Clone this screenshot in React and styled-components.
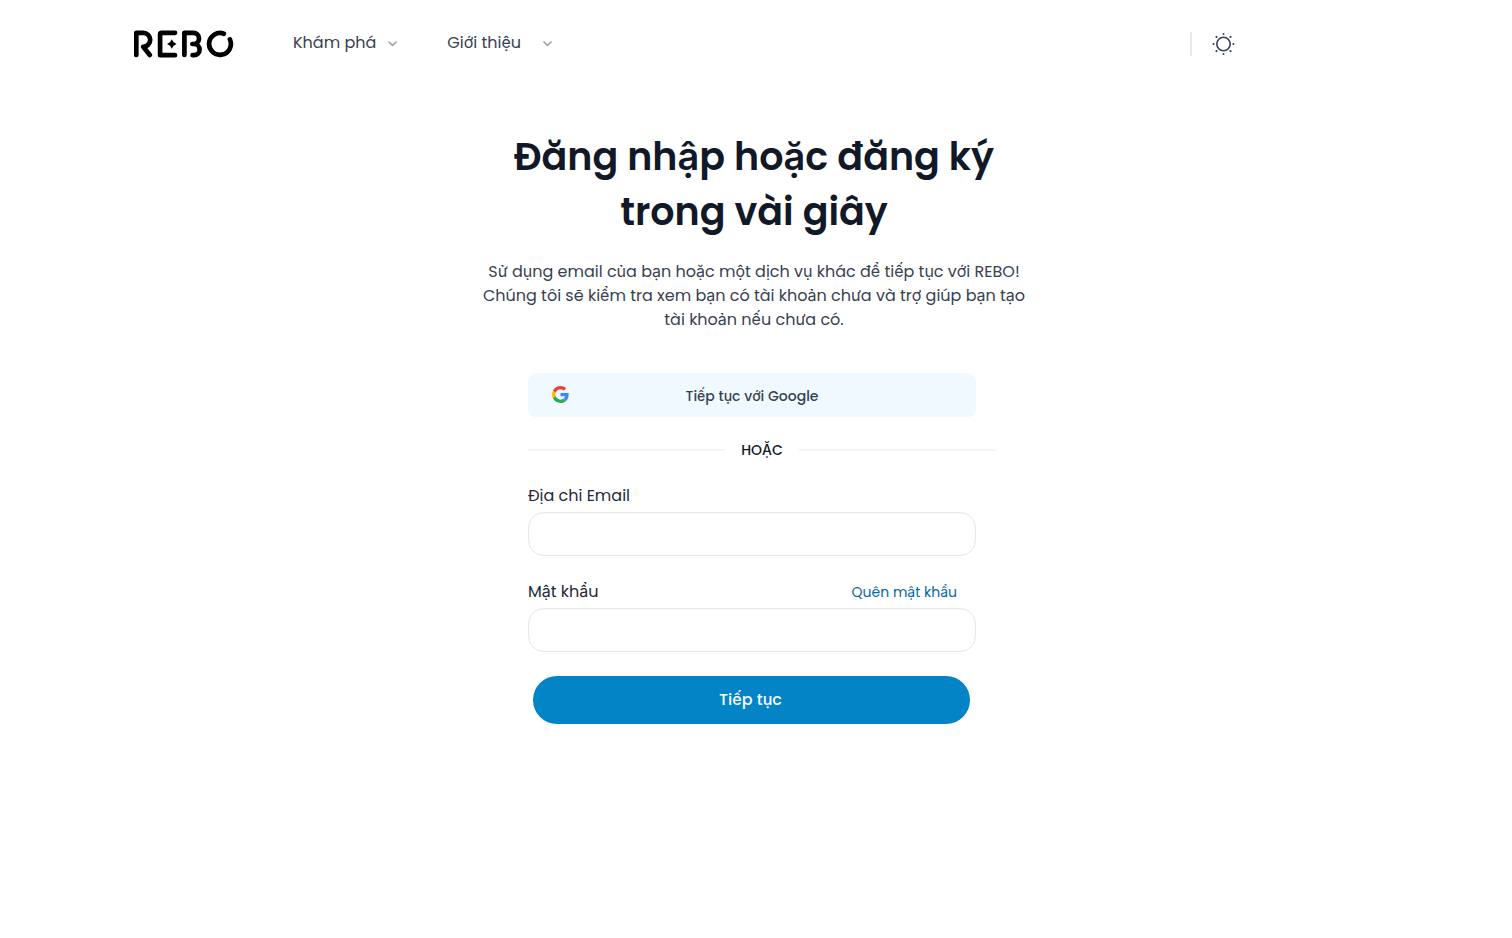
import React from "react";
import styled, { createGlobalStyle } from "styled-components";

const GlobalStyle = createGlobalStyle`
  *, *::before, *::after { box-sizing: border-box; }
  body {
    margin: 0;
    background: #ffffff;
    color: #111827;
    font-family: Poppins, Inter, "Liberation Sans", sans-serif;
    font-size: 16px;
    line-height: 24px;
  }
  button, input { font: inherit; }
`;

const Header = styled.header`
  display: flex;
  align-items: center;
  height: 88px;
  padding: 0 264px 0 134px;
`;

const LogoLink = styled.a`
  display: flex;
  color: #000000;
`;

const Nav = styled.nav`
  display: flex;
  align-items: center;
  gap: 50px;
  margin-left: 59px;
`;

const NavButton = styled.button`
  display: flex;
  align-items: center;
  gap: ${(p) => p.$gap}px;
  padding: 0 0 2px;
  border: 0;
  background: none;
  color: #374151;
  cursor: pointer;
  svg { margin-top: 2px; color: #9ca3af; }
`;

const HeaderTools = styled.div`
  display: flex;
  align-items: center;
  gap: 8px;
  margin-left: auto;
`;

const Separator = styled.span`
  width: 2px;
  height: 24px;
  background: #e5e7eb;
`;

const IconButton = styled.button`
  display: flex;
  align-items: center;
  justify-content: center;
  width: 48px;
  height: 48px;
  padding: 0;
  border: 0;
  border-radius: 24px;
  background: none;
  color: #374151;
  cursor: pointer;
`;

const Main = styled.main`
  width: 100%;
  max-width: 548px;
  margin: 0 auto;
  padding: 41px 4px 96px 0;
`;

const Title = styled.h1`
  margin: 0;
  font-size: 38px;
  font-weight: 600;
  line-height: 55px;
  text-align: center;
  white-space: nowrap;
`;

const Intro = styled.p`
  margin: 21px 0 0;
  color: #374151;
  text-align: center;
  white-space: nowrap;
`;

const Form = styled.form`
  display: flex;
  flex-direction: column;
  margin-top: 41px;
  padding: 0 30px 0 46px;
`;

const GoogleButton = styled.button`
  display: flex;
  align-items: center;
  height: 44px;
  margin-right: 20px;
  padding: 0 24px;
  border: 0;
  border-radius: 8px;
  background: #f0f9ff;
  color: #374151;
  font-size: 14px;
  font-weight: 500;
  cursor: pointer;
  svg { margin-bottom: 2px; }
  span { flex: 1; padding: 2px 17px 0 0; text-align: center; }
`;

const Divider = styled.div`
  display: flex;
  align-items: center;
  gap: 16px;
  margin-top: 23px;
  font-size: 14px;
  font-weight: 500;
  line-height: 20px;
  &::before, &::after {
    content: "";
    flex: 1;
    height: 2px;
    background: #f3f4f6;
  }
`;

const Field = styled.div`
  display: flex;
  flex-direction: column;
  gap: 4px;
  margin: 24px 20px 0 0;
`;

const FieldHead = styled.div`
  display: flex;
  align-items: center;
  justify-content: space-between;
  padding-right: 19px;
  color: #1f2937;
`;

const ForgotLink = styled.a`
  color: #0369a1;
  font-size: 14px;
  text-decoration: none;
`;

const TextInput = styled.input`
  width: 100%;
  height: 44px;
  padding: 0 16px;
  border: 1px solid #e5e7eb;
  border-radius: 16px;
  background: #ffffff;
  color: #111827;
  outline: none;
`;

const SubmitButton = styled.button`
  height: 48px;
  margin: 24px 26px 0 5px;
  padding: 0 2px 0 0;
  border: 0;
  border-radius: 24px;
  background: #0284c7;
  color: #f9fafb;
  font-weight: 500;
  cursor: pointer;
`;

function Logo() {
  return (
    <svg width="100" height="28" viewBox="0 0 100 28" fill="none" stroke="currentColor" strokeWidth="4.7" strokeLinecap="round" strokeLinejoin="round" role="img" aria-label="REBO">
      <path d="M2.3 25V2.8H9.2a6.9 6.9 0 0 1 0 14L15.8 25" />
      <path d="M41 2.8H27.6a1.5 1.5 0 0 0-1.5 1.5V25.2H41" />
      <path d="M50.4 25V2.8H59.4a5.6 5.6 0 0 1 0 11.2H58.4M60 14a5.6 5.6 0 0 1 0 11.2H58.6" />
      <path d="M89.8 3.7A10.9 10.9 0 1 0 95.9 9.4" />
      <path d="M37.8 9.3Q39 12.8 42.5 14Q39 15.2 37.8 18.7Q36.6 15.2 33.1 14Q36.6 12.8 37.8 9.3Z" fill="currentColor" stroke="none" />
    </svg>
  );
}

function Chevron() {
  return (
    <svg width="9" height="6" viewBox="0 0 9 6" fill="none" stroke="currentColor" strokeWidth="1.7" strokeLinecap="round" strokeLinejoin="round" aria-hidden="true">
      <path d="M1 1L4.5 4.5L8 1" />
    </svg>
  );
}

function SunIcon() {
  return (
    <svg width="24" height="24" viewBox="0 0 24 24" fill="none" stroke="currentColor" strokeLinecap="round" aria-hidden="true">
      <circle cx="11.5" cy="12" r="6.7" strokeWidth="1.6" />
      <path strokeWidth="2" d="M18.64 19.14L18.51 19.01M18.51 4.99L18.64 4.86M4.36 19.14L4.49 19.01M11.5 2.08V2M11.5 22V21.92M1.58 12H1.5M21.5 12H21.42M4.49 4.99L4.36 4.86" />
    </svg>
  );
}

function GoogleIcon() {
  return (
    <svg width="17" height="17" viewBox="0 0 48 48" aria-hidden="true">
      <path fill="#EA4335" d="M24 9.5c3.54 0 6.71 1.22 9.21 3.6l6.85-6.85C35.9 2.38 30.47 0 24 0 14.62 0 6.51 5.38 2.56 13.22l7.98 6.19C12.43 13.72 17.74 9.5 24 9.5z" />
      <path fill="#4285F4" d="M46.98 24.55c0-1.57-.15-3.09-.38-4.55H24v9.02h12.94c-.58 2.96-2.26 5.48-4.78 7.18l7.73 6c4.51-4.18 7.09-10.36 7.09-17.65z" />
      <path fill="#FBBC05" d="M10.53 28.59c-.48-1.45-.76-2.99-.76-4.59s.27-3.14.76-4.59l-7.98-6.19C.92 16.46 0 20.12 0 24c0 3.88.92 7.54 2.56 10.78l7.97-6.19z" />
      <path fill="#34A853" d="M24 48c6.48 0 11.93-2.13 15.89-5.81l-7.73-6c-2.15 1.45-4.92 2.3-8.16 2.3-6.26 0-11.57-4.22-13.47-9.91l-7.98 6.19C6.51 42.62 14.62 48 24 48z" />
    </svg>
  );
}

export default function App() {
  return (
    <>
      <GlobalStyle />
      <Header>
        <LogoLink href="#"><Logo /></LogoLink>
        <Nav>
          <NavButton type="button" $gap={12}>Khám phá<Chevron /></NavButton>
          <NavButton type="button" $gap={22}>Giới thiệu<Chevron /></NavButton>
        </Nav>
        <HeaderTools>
          <Separator />
          <IconButton type="button" aria-label="Giao diện"><SunIcon /></IconButton>
        </HeaderTools>
      </Header>
      <Main>
        <Title>Đăng nhập hoặc đăng ký<br />trong vài giây</Title>
        <Intro>
          Sử dụng email của bạn hoặc một dịch vụ khác để tiếp tục với REBO!<br />
          Chúng tôi sẽ kiểm tra xem bạn có tài khoản chưa và trợ giúp bạn tạo<br />
          tài khoản nếu chưa có.
        </Intro>
        <Form onSubmit={(e) => e.preventDefault()}>
          <GoogleButton type="button"><GoogleIcon /><span>Tiếp tục với Google</span></GoogleButton>
          <Divider>HOẶC</Divider>
          <Field>
            <FieldHead><label htmlFor="email">Địa chỉ Email</label></FieldHead>
            <TextInput id="email" type="email" />
          </Field>
          <Field>
            <FieldHead>
              <label htmlFor="password">Mật khẩu</label>
              <ForgotLink href="#">Quên mật khẩu</ForgotLink>
            </FieldHead>
            <TextInput id="password" type="password" />
          </Field>
          <SubmitButton type="submit">Tiếp tục</SubmitButton>
        </Form>
      </Main>
    </>
  );
}
